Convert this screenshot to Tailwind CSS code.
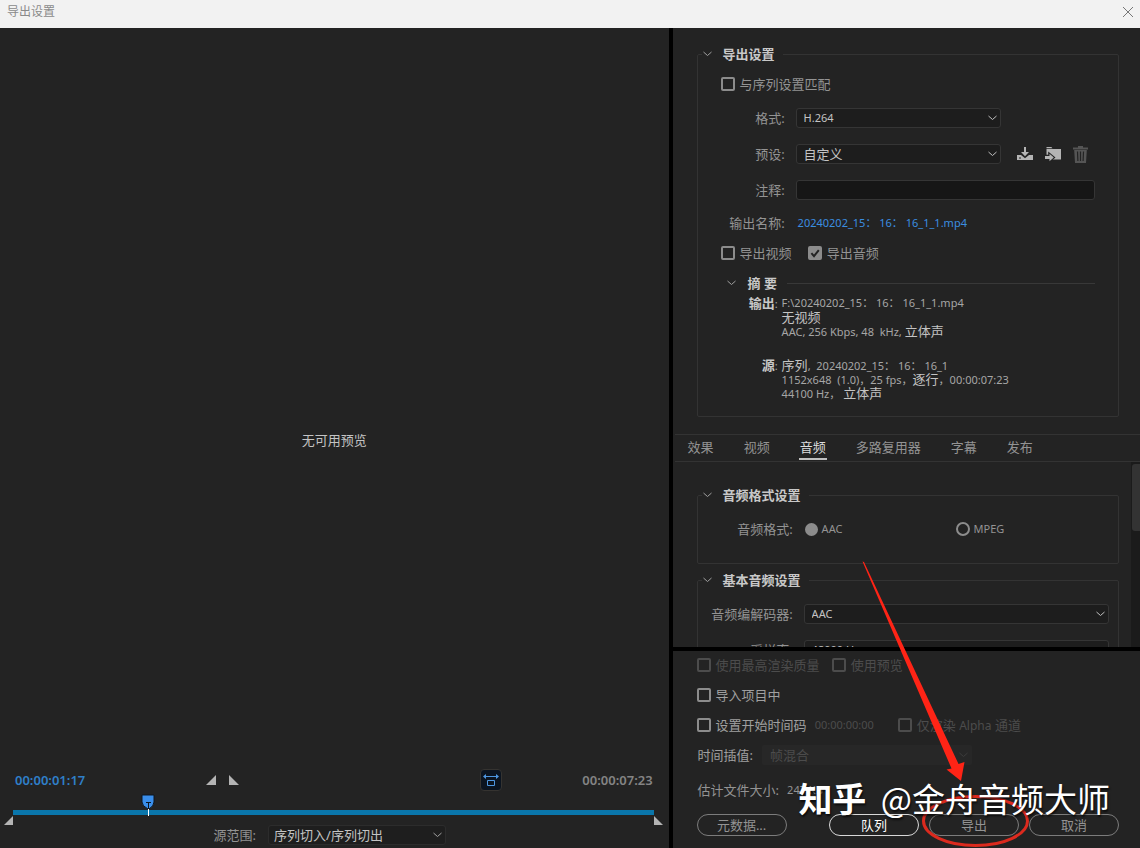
<!DOCTYPE html>
<html lang="zh-CN">
<head>
<meta charset="utf-8">
<meta name="viewport" content="width=device-width, initial-scale=1">
<title>导出设置</title>
<script src="https://cdn.jsdelivr.net/npm/@tailwindcss/browser@4"></script>
</head>
<body class="h-screen flex flex-col overflow-hidden bg-[#232323] text-[#939393] text-[13px] leading-5 font-['Noto_Sans','Noto_Sans_CJK_SC',sans-serif]">

<svg class="hidden">
  <symbol id="chevron" viewBox="0 0 10 6"><path d="M1.500 1L5.500 4.500l4-3.500" fill="none" stroke="currentColor" stroke-width="1"/></symbol>
  <symbol id="tick" viewBox="0 0 14 14"><path d="M3.4 7.2l2.6 2.9 4.8-6" fill="none" stroke="#232323" stroke-width="2"/></symbol>
</svg>

<header class="h-7 shrink-0 flex items-center justify-between bg-[#f2f2f2] pl-[7px] pr-[6px] pb-1">
  <h1 class="text-xs text-[#8a8a8a]">导出设置</h1>
  <button type="button" aria-label="关闭" class="text-[#777]">
    <svg class="size-3 block" viewBox="0 0 12 12"><path d="M1 1l10 10M11 1L1 11" stroke="currentColor" stroke-width="1" fill="none"/></svg>
  </button>
</header>

<div class="flex-1 min-h-0 flex">
  <!-- Preview and timeline -->
  <main class="flex-1 min-w-0 flex flex-col">
    <div class="flex-1 flex items-center justify-center pt-[82px] text-[#c4c4c4]">无可用预览</div>

    <div class="flex items-center pl-[15px] pr-4 h-[22px]">
      <span class="font-semibold text-[#2f7fc8]">00:00:01:17</span>
      <span class="grow-[120]"></span>
      <button type="button" aria-label="设置入点" class="text-[#b4b4b4]"><svg class="size-[10px] block" viewBox="0 0 10 10"><path d="M10 0v10H0z" fill="currentColor"/></svg></button>
      <button type="button" aria-label="设置出点" class="text-[#b4b4b4] ml-[13px]"><svg class="size-[10px] block" viewBox="0 0 10 10"><path d="M0 0v10h10z" fill="currentColor"/></svg></button>
      <span class="grow-[240]"></span>
      <button type="button" aria-label="长宽比校正" class="size-[22px] rounded-sm border border-[#353330] bg-[#0b1420] text-[#4d96e0] flex items-center justify-center">
        <svg class="w-4 h-[14px]" viewBox="0 0 16 14" fill="none" stroke="currentColor"><path d="M1 3.5h14"/><path d="M0 3.5l3-2.5v5zM16 3.5l-3-2.5v5z" fill="currentColor" stroke="none"/><path d="M4.5 7.5h7v5h-7z"/></svg>
      </button>
      <span class="grow-[80]"></span>
      <span class="font-semibold text-[#848484]">00:00:07:23</span>
    </div>

    <div class="relative h-[5px] mt-[19px] ml-[13px] mr-[15px] bg-[#0a76ab]">
      <svg class="absolute -left-[9px] top-[6px] size-[9px]" viewBox="0 0 9 9"><path d="M9 0v9H0z" fill="#b4b4b4"/></svg>
      <svg class="absolute -right-[9px] top-[6px] size-[9px]" viewBox="0 0 9 9"><path d="M0 0v9h9z" fill="#b4b4b4"/></svg>
      <svg class="absolute left-[20%] -top-4 w-[14px] h-[22px]" viewBox="0 0 14 22"><path d="M1 1h12v7q0 4-5 7H7q-6-3-6-7z" fill="#3a8eea" stroke="#0d1722"/><path d="M5 8.500h5M7.500 8v7" stroke="#0d1722" fill="none"/><path d="M7.500 15v7" stroke="#fff" fill="none"/></svg>
    </div>

    <div class="flex items-center justify-center gap-3 mt-[10px] pr-[9px] mb-[3px]">
      <label for="range">源范围:</label>
      <div class="grid items-center w-[178px]">
        <select id="range" class="col-start-1 row-start-1 appearance-none h-5 w-full rounded-[3px] border border-[#2c2c2c] bg-[#1e1e1e] pl-[5px] text-[13px] leading-[18px] text-[#c4c4c4]"><option>序列切入/序列切出</option></select>
        <svg class="col-start-1 row-start-1 justify-self-end mr-1 w-[10px] h-[6px] pointer-events-none text-[#a0a0a0]"><use href="#chevron"/></svg>
      </div>
    </div>
  </main>

  <div class="w-1 shrink-0 bg-black"></div>

  <!-- Settings -->
  <aside class="relative w-[41%] shrink-0 flex flex-col">
    <section class="pt-4 pl-6 pr-[21px] pb-[17px]">
      <fieldset class="border border-[#333] rounded-[2px] pb-4">
        <legend class="ml-1 pr-2 h-5 flex items-center gap-[11px] font-bold text-[#c8c8c8]">
          <button type="button" aria-label="折叠导出设置" class="text-[#a0a0a0]"><svg class="w-[10px] h-[6px] block"><use href="#chevron"/></svg></button>导出设置
        </legend>

        <label class="flex items-center gap-[5px] mt-[10px] ml-[23px]">
          <input type="checkbox" class="appearance-none size-[14px] rounded-[2px] border-2 border-[#8c8c8c]">与序列设置匹配
        </label>

        <div class="mr-[23px]">
          <div class="flex items-center mt-[14px]">
            <label for="format" class="w-[87px] mr-[11px] text-right">格式:</label>
            <div class="flex-1 grid items-center mr-[94px]">
              <select id="format" class="col-start-1 row-start-1 appearance-none h-5 w-full rounded-[3px] border border-[#353535] bg-[#1d1d1d] pl-[7px] text-[11px] leading-[18px] text-[#c4c4c4]"><option>H.264</option></select>
              <svg class="col-start-1 row-start-1 justify-self-end mr-1 w-[10px] h-[6px] pointer-events-none text-[#c0c0c0]"><use href="#chevron"/></svg>
            </div>
          </div>

          <div class="flex items-center mt-4">
            <label for="preset" class="w-[87px] mr-[11px] text-right">预设:</label>
            <div class="flex-1 grid items-center">
              <select id="preset" class="col-start-1 row-start-1 appearance-none h-5 w-full rounded-[3px] border border-[#353535] bg-[#1d1d1d] pl-[7px] text-[13px] leading-[18px] text-[#c4c4c4]"><option>自定义</option></select>
              <svg class="col-start-1 row-start-1 justify-self-end mr-1 w-[10px] h-[6px] pointer-events-none text-[#c0c0c0]"><use href="#chevron"/></svg>
            </div>
            <div class="w-[94px] pl-4 pr-[7px] flex items-center justify-between text-[#b4b4b4]">
              <button type="button" aria-label="保存预设"><svg class="w-4 h-[14px] block" viewBox="0 0 16 14"><path d="M7 0h2v5h3L8 9.200 4 5h3z" fill="currentColor"/><path d="M0 8h4l4 3.200L12 8h4v5H0z" fill="currentColor"/><path d="M2 10.500h2v1H2z" fill="#232323"/></svg></button>
              <button type="button" aria-label="导入预设"><svg class="w-4 h-4 block" viewBox="0 0 16 16"><path d="M1.500 1h4.800l1.200 1.200H1.500z" fill="currentColor"/><path d="M1.500 3H16v10.500H1.500z" fill="currentColor"/><path d="M-1 8.700h4.200V5.500l7.300 6-7.300 6v-3H-1z" fill="#232323"/><path d="M0 10h4.500V7.800L8.800 11.500 4.500 15.200V13H0z" fill="currentColor"/></svg></button>
              <button type="button" disabled aria-label="删除预设" class="text-[#555]"><svg class="w-[15px] h-[17px] block" viewBox="0 0 15 17"><path d="M5 0h5v1.500h5v2H0v-2h5z" fill="currentColor"/><path d="M1.200 4h12.600L13 17H2z" fill="currentColor"/><path d="M4.500 5.500l.4 9.500M7.500 5.500V15M10.500 5.500l-.4 9.500" stroke="#232323" stroke-width="1.200"/></svg></button>
            </div>
          </div>

          <div class="flex items-center mt-4">
            <label for="note" class="w-[87px] mr-[11px] text-right">注释:</label>
            <input id="note" type="text" class="flex-1 min-w-0 h-5 rounded-[3px] border border-[#353535] bg-[#161616] px-[7px] text-[11px] text-[#c4c4c4]">
          </div>

          <div class="flex items-center mt-[13px]">
            <span class="w-[87px] mr-[13px] text-right">输出名称:</span>
            <a href="#" class="text-[11px] text-[#3b8ee0] whitespace-pre">20240202_15： 16： 16_1_1.mp4</a>
          </div>
        </div>

        <div class="flex items-center gap-4 mt-[10px] ml-[23px]">
          <label class="flex items-center gap-[5px]"><input type="checkbox" class="appearance-none size-[14px] rounded-[2px] border-2 border-[#8c8c8c]">导出视频</label>
          <label class="flex items-center gap-[5px]">
            <span class="grid"><input type="checkbox" checked class="peer col-start-1 row-start-1 appearance-none size-[14px] rounded-[2px] border-2 border-[#8c8c8c] checked:bg-[#8c8c8c]"><svg class="col-start-1 row-start-1 size-[14px] hidden peer-checked:block pointer-events-none"><use href="#tick"/></svg></span>导出音频
          </label>
        </div>

        <div class="flex items-center mt-[10px] ml-7 mr-[23px]">
          <button type="button" aria-label="折叠摘要" class="text-[#a0a0a0]"><svg class="w-[10px] h-[6px] block"><use href="#chevron"/></svg></button>
          <h2 class="ml-3 font-bold text-[#c8c8c8]">摘 要</h2>
          <span class="flex-1 ml-[10px] h-px bg-[#383838]"></span>
        </div>

        <dl class="grid grid-cols-[80px_1fr] gap-x-1 gap-y-5 mt-[3px] text-[11px] leading-[14px] text-[#a6a6a6]">
          <dt class="text-right"><b class="text-[13px] text-[#c8c8c8]">输出</b>:</dt>
          <dd>
            <p class="h-[14px] whitespace-pre">F:\20240202_15： 16： 16_1_1.mp4</p>
            <p class="h-[14px] text-[13px] text-[#c4c4c4]">无视频</p>
            <p class="h-[14px] whitespace-pre">AAC, 256 Kbps, 48  kHz, <span class="text-[13px] text-[#c4c4c4]">立体声</span></p>
          </dd>
          <dt class="text-right"><b class="text-[13px] text-[#c8c8c8]">源</b>:</dt>
          <dd>
            <p class="h-[14px] whitespace-pre"><span class="text-[13px] text-[#c4c4c4]">序列</span>,  20240202_15： 16： 16_1</p>
            <p class="h-[14px] whitespace-pre">1152x648  (1.0)，25 fps，<span class="text-[13px] text-[#c4c4c4]">逐行</span>，00:00:07:23</p>
            <p class="h-[14px] whitespace-pre">44100 Hz， <span class="text-[13px] text-[#c4c4c4]">立体声</span></p>
          </dd>
        </dl>
      </fieldset>
    </section>

    <nav class="h-7 shrink-0 flex items-start gap-7 ml-[2px] pl-3 border-y border-[#333]">
      <button type="button" class="h-[25px] px-px border-b-2 border-transparent">效果</button>
      <button type="button" class="h-[25px] px-px border-b-2 border-transparent">视频</button>
      <button type="button" aria-current="page" class="h-[25px] px-px border-b-2 border-[#c0c0c0] text-[#dcdcdc]">音频</button>
      <button type="button" class="h-[25px] px-px border-b-2 border-transparent">多路复用器</button>
      <button type="button" class="h-[25px] px-px border-b-2 border-transparent">字幕</button>
      <button type="button" class="h-[25px] px-px border-b-2 border-transparent">发布</button>
    </nav>

    <div class="flex-1 min-h-0 flex overflow-hidden">
      <div class="flex-1 pt-[23px] pl-6 pr-3">
        <fieldset class="border border-[#333] rounded-[2px] pb-6">
          <legend class="ml-1 pr-2 h-5 flex items-center gap-[11px] font-bold text-[#c8c8c8]">
            <button type="button" aria-label="折叠音频格式设置" class="text-[#a0a0a0]"><svg class="w-[10px] h-[6px] block"><use href="#chevron"/></svg></button>音频格式设置
          </legend>
          <div class="flex items-center mt-[14px]">
            <span class="w-[95px] mr-3 text-right">音频格式:</span>
            <label class="w-[151px] flex items-center gap-1 text-[11px]"><input type="radio" name="fmt" checked class="appearance-none size-[13px] rounded-full border-2 border-[#8c8c8c] checked:bg-[#8c8c8c]">AAC</label>
            <label class="flex items-center gap-1 text-[11px]"><input type="radio" name="fmt" class="appearance-none size-[14px] rounded-full border-2 border-[#8c8c8c] checked:bg-[#8c8c8c]">MPEG</label>
          </div>
        </fieldset>

        <fieldset class="mt-[6px] border border-[#333] rounded-[2px] pb-6">
          <legend class="ml-1 pr-2 h-5 flex items-center gap-[11px] font-bold text-[#c8c8c8]">
            <button type="button" aria-label="折叠基本音频设置" class="text-[#a0a0a0]"><svg class="w-[10px] h-[6px] block"><use href="#chevron"/></svg></button>基本音频设置
          </legend>
          <div class="flex items-center mt-[14px] mr-[9px]">
            <label for="codec" class="w-[95px] mr-[11px] text-right">音频编解码器:</label>
            <div class="flex-1 grid items-center">
              <select id="codec" class="col-start-1 row-start-1 appearance-none h-5 w-full rounded-[3px] border border-[#353535] bg-[#1d1d1d] pl-[7px] text-[11px] leading-[18px] text-[#c4c4c4]"><option>AAC</option></select>
              <svg class="col-start-1 row-start-1 justify-self-end mr-1 w-[10px] h-[6px] pointer-events-none text-[#c0c0c0]"><use href="#chevron"/></svg>
            </div>
          </div>
          <div class="flex items-center mt-4 mr-[9px]">
            <label for="rate" class="w-[95px] mr-[11px] text-right">采样率:</label>
            <div class="flex-1 grid items-center">
              <select id="rate" class="col-start-1 row-start-1 appearance-none h-5 w-full rounded-[3px] border border-[#353535] bg-[#1d1d1d] pl-[7px] text-[11px] leading-[18px] text-[#c4c4c4]"><option>48000 Hz</option></select>
              <svg class="col-start-1 row-start-1 justify-self-end mr-1 w-[10px] h-[6px] pointer-events-none text-[#c0c0c0]"><use href="#chevron"/></svg>
            </div>
          </div>
        </fieldset>
      </div>
      <div class="w-[9px] pt-[2px] bg-[#1b1b1b]"><div class="ml-px h-[67px] rounded-l-[3px] bg-[#333]"></div></div>
    </div>

    <div class="h-1 shrink-0 bg-black"></div>

    <section class="shrink-0 pt-1 pl-6 pr-[21px] pb-3">
      <div class="h-5 flex items-center gap-3 text-[#4c4c4c]">
        <label class="flex items-center gap-[5px]"><input type="checkbox" disabled class="appearance-none size-[14px] rounded-[2px] border-2 border-[#4c4c4c]">使用最高渲染质量</label>
        <label class="flex items-center gap-[5px]"><input type="checkbox" disabled class="appearance-none size-[14px] rounded-[2px] border-2 border-[#4c4c4c]">使用预览</label>
      </div>
      <label class="h-5 flex items-center gap-[5px] mt-[10px] text-[#a0a0a0]"><input type="checkbox" class="appearance-none size-[14px] rounded-[2px] border-2 border-[#8c8c8c]">导入项目中</label>
      <div class="h-5 flex items-center mt-[10px]">
        <label class="flex items-center gap-[5px] text-[#a0a0a0]"><input type="checkbox" class="appearance-none size-[14px] rounded-[2px] border-2 border-[#8c8c8c]">设置开始时间码</label>
        <span class="ml-2 text-[11px] text-[#4c4c4c]">00:00:00:00</span>
        <label class="flex items-center gap-[5px] ml-6 text-[#4c4c4c]"><input type="checkbox" disabled class="appearance-none size-[14px] rounded-[2px] border-2 border-[#4c4c4c]"><span>仅渲染 <span class="text-[12px]">Alpha</span> 通道</span></label>
      </div>
      <div class="h-5 flex items-center mt-[10px] pl-px text-[#a0a0a0]">
        <label for="interp">时间插值:</label>
        <div class="grid items-center ml-[9px] w-[210px]">
          <select id="interp" disabled class="col-start-1 row-start-1 appearance-none h-5 w-full rounded-[2px] bg-[#272727] pl-2 text-[13px] leading-5 text-[#4c4c4c] opacity-100"><option>帧混合</option></select>
          <svg class="col-start-1 row-start-1 justify-self-end mr-1 w-[10px] h-[6px] pointer-events-none text-[#3c3c3c]"><use href="#chevron"/></svg>
        </div>
      </div>
      <p class="h-5 flex items-center gap-2 mt-[15px] pl-px">估计文件大小: <span class="text-[11px]">247 KB</span></p>
      <div class="flex items-center gap-[10px] mt-[14px]">
        <button type="button" class="w-[90px] h-[22px] rounded-full border border-[#7c7c7c]">元数据...</button>
        <button type="button" class="w-[90px] h-[22px] rounded-full border border-[#d8d8d8] text-white ml-auto">队列</button>
        <button type="button" class="w-[90px] h-[22px] rounded-full border border-[#7c7c7c]">导出</button>
        <button type="button" class="w-[90px] h-[22px] rounded-full border border-[#7c7c7c]">取消</button>
      </div>
    </section>

    <!-- Annotation: arrow and ring round the export button -->
    <svg class="absolute right-[110px] bottom-0 w-[170px] h-[290px] pointer-events-none" viewBox="0 0 170 290">
      <path d="M2.500 3.500L4 4 98.500 206l6-2-3.500 19-14.500-11.500 5-1z" fill="#ff2416"/>
      <ellipse cx="115.500" cy="263" rx="52" ry="24.500" fill="none" stroke="#dc2a1e" stroke-width="3"/>
    </svg>
    <p class="absolute right-[30px] bottom-[26px] flex items-center text-[33px] leading-[48px] text-white whitespace-pre pointer-events-none font-['Noto_Sans_CJK_SC',sans-serif] [text-shadow:1px_2px_2px_rgb(0_0_0/0.7)]"><b class="mr-[7px] text-[34px] font-bold">知乎</b> @金舟音频大师</p>
  </aside>
</div>
</body>
</html>
